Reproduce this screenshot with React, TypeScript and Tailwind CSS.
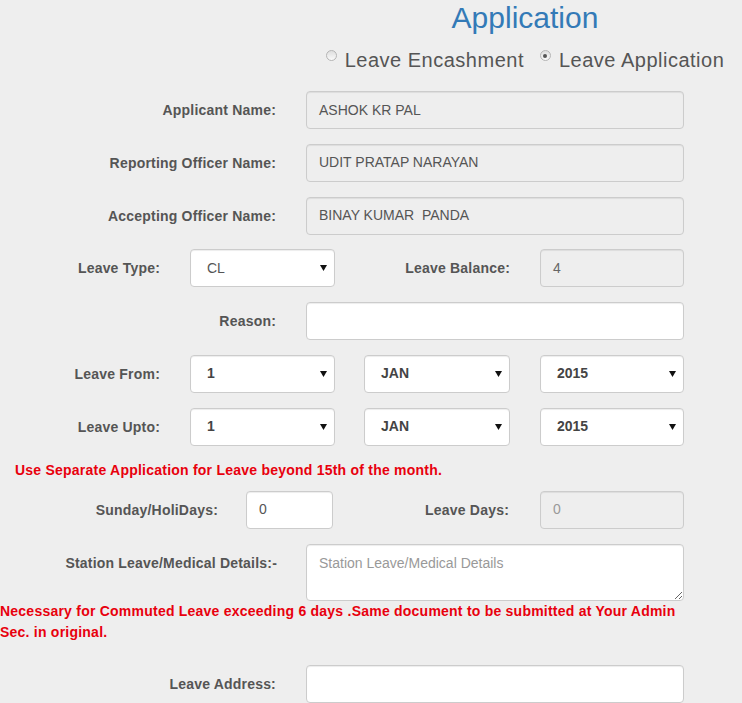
import React from "react";

const font = "font-['Liberation_Sans',Arial,sans-serif]";

const labelCls = "text-right text-[14px] font-bold text-[#555] leading-[20px] tracking-[0.2px] shrink-0";
const inputCls =
  "h-[38px] border border-[#ccc] rounded-[4px] shadow-[inset_0_1px_1px_rgba(0,0,0,0.075)] px-3 flex items-center text-[14px] text-[#555] shrink-0";

const Arrow = () => (
  <svg width="7" height="6" viewBox="0 0 7 6" className="shrink-0">
    <polygon points="0,0 7,0 3.5,6" fill="#111" />
  </svg>
);

const Select = ({ value, w, bold }: { value: string; w: string; bold?: boolean }) => (
  <div
    className={`${w} h-[38px] bg-white border border-[#ccc] rounded-[4px] shadow-[inset_0_1px_1px_rgba(0,0,0,0.075)] pl-[16px] pr-[7px] flex items-center justify-between text-[14px] shrink-0 ${
      bold ? "font-bold text-[#444]" : "text-[#555]"
    }`}
  >
    <span>{value}</span>
    <Arrow />
  </div>
);

const Radio = ({ checked }: { checked?: boolean }) => (
  <span className="mt-[1px] w-[11px] h-[11px] rounded-full border border-[#b5b5b5] bg-gradient-to-b from-[#dedede] to-[#fafafa] flex items-center justify-center shrink-0">
    {checked && <span className="w-[4px] h-[4px] rounded-full bg-[#555]" />}
  </span>
);

export default function App() {
  return (
    <div className={`min-h-screen bg-[#eeeeee] ${font} text-[#555]`}>
      {/* header */}
      <div className="ml-[308px] text-center pt-[1px]">
        <h1 className="text-[30px] leading-[33px] text-[#337ab7]">Application</h1>
        <div className="mt-[15px] inline-flex items-start text-[20px] leading-[22px] tracking-[0.5px] text-[#555]">
          <Radio />
          <span className="ml-[8px]">Leave Encashment</span>
          <span className="ml-[16px]" />
          <Radio checked />
          <span className="ml-[8px]">Leave Application</span>
        </div>
      </div>

      {/* form */}
      <div className="mt-[20px] flex flex-col gap-[14.8px]">
        <div className="flex items-center">
          <div className={`${labelCls} w-[276px]`}>Applicant Name:</div>
          <div className={`${inputCls} ml-[30px] w-[378px] bg-[#eee]`}>ASHOK KR PAL</div>
        </div>
        <div className="flex items-center">
          <div className={`${labelCls} w-[276px]`}>Reporting Officer Name:</div>
          <div className={`${inputCls} ml-[30px] w-[378px] bg-[#eee]`}>UDIT PRATAP NARAYAN</div>
        </div>
        <div className="flex items-center">
          <div className={`${labelCls} w-[276px]`}>Accepting Officer Name:</div>
          <div className={`${inputCls} ml-[30px] w-[378px] bg-[#eee] whitespace-pre`}>BINAY KUMAR  PANDA</div>
        </div>
        <div className="flex items-center">
          <div className={`${labelCls} w-[160px]`}>Leave Type:</div>
          <div className="ml-[30px]">
            <Select value="CL" w="w-[145px]" />
          </div>
          <div className={`${labelCls} w-[175px]`}>Leave Balance:</div>
          <div className={`${inputCls} ml-[30px] w-[144px] bg-[#eee] text-[#666]`}>4</div>
        </div>
        <div className="flex items-center">
          <div className={`${labelCls} w-[276px]`}>Reason:</div>
          <div className={`${inputCls} ml-[30px] w-[378px] bg-white`} />
        </div>
        <div className="flex items-center">
          <div className={`${labelCls} w-[160px]`}>Leave From:</div>
          <div className="ml-[30px] flex">
            <Select value="1" w="w-[145px]" bold />
            <div className="ml-[29px]">
              <Select value="JAN" w="w-[146px]" bold />
            </div>
            <div className="ml-[30px]">
              <Select value="2015" w="w-[144px]" bold />
            </div>
          </div>
        </div>
        <div className="flex items-center">
          <div className={`${labelCls} w-[160px]`}>Leave Upto:</div>
          <div className="ml-[30px] flex">
            <Select value="1" w="w-[145px]" bold />
            <div className="ml-[29px]">
              <Select value="JAN" w="w-[146px]" bold />
            </div>
            <div className="ml-[30px]">
              <Select value="2015" w="w-[144px]" bold />
            </div>
          </div>
        </div>
      </div>

      <p className="mt-[14px] ml-[15px] text-[14px] leading-[20px] font-bold tracking-[0.23px] text-[#e8000d]">
        Use Separate Application for Leave beyond 15th of the month.
      </p>

      <div className="mt-[11px] flex items-center">
        <div className={`${labelCls} w-[218px]`}>Sunday/HoliDays:</div>
        <div className={`${inputCls} ml-[28px] w-[87px] bg-white text-[#555]`}>0</div>
        <div className={`${labelCls} w-[176px]`}>Leave Days:</div>
        <div className={`${inputCls} ml-[31px] w-[144px] bg-[#eee] text-[#999]`}>0</div>
      </div>

      <div className="mt-[15px] flex items-start">
        <div className={`${labelCls} w-[277px] pt-[9px]`}>Station Leave/Medical Details:-</div>
        <textarea
          placeholder="Station Leave/Medical Details"
          className="ml-[29px] w-[378px] h-[57px] bg-white border border-[#ccc] rounded-[4px] shadow-[inset_0_1px_1px_rgba(0,0,0,0.075)] px-3 pt-[8px] text-[14px] leading-[20px] text-[#555] placeholder:text-[#999] outline-none"
        />
      </div>

      <p className="w-[690px] text-[14px] leading-[21px] font-bold tracking-[0.23px] text-[#e8000d]">
        Necessary for Commuted Leave exceeding 6 days .Same document to be submitted at Your Admin Sec. in original.
      </p>

      <div className="mt-[22px] flex items-center pb-[20px]">
        <div className={`${labelCls} w-[276px]`}>Leave Address:</div>
        <div className={`${inputCls} ml-[30px] w-[378px] bg-white`} />
      </div>
    </div>
  );
}
